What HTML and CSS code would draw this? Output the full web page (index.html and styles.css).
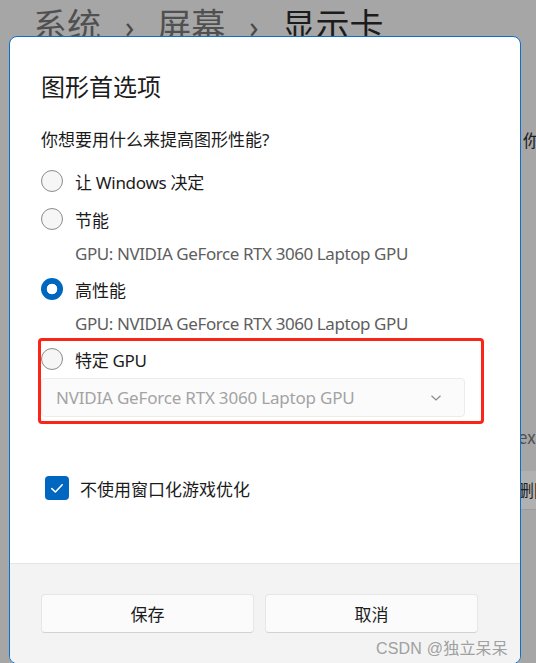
FILE: index.html
```html
<!DOCTYPE html>
<html lang="zh-CN">
<head>
<meta charset="utf-8">
<title>图形首选项</title>
<link rel="stylesheet" href="styles.css">
</head>
<body>
<div class="page">
  <div class="crumbs">
    <span class="crumb">系统</span><span class="sep">›</span><span class="crumb">屏幕</span><span class="sep">›</span><span class="crumb current">显示卡</span>
  </div>
  <div class="bg-list">
    <div class="bg-row first">你</div>
    <div class="bg-row mid">exe</div>
    <div class="bg-row band">删除</div>
  </div>
</div>

<div class="dialog">
  <div class="body">
    <h1 class="title">图形首选项</h1>
    <p class="question">你想要用什么来提高图形性能?</p>
    <div class="options">
      <label class="radio-row"><span class="radio"></span><span class="latin">让 Windows 决定</span></label>
      <label class="radio-row"><span class="radio"></span><span>节能</span></label>
      <div class="sub">GPU: NVIDIA GeForce RTX 3060 Laptop GPU</div>
      <label class="radio-row"><span class="radio checked"></span><span>高性能</span></label>
      <div class="sub">GPU: NVIDIA GeForce RTX 3060 Laptop GPU</div>
      <label class="radio-row"><span class="radio"></span><span class="latin">特定 GPU</span></label>
      <div class="select">
        <span>NVIDIA GeForce RTX 3060 Laptop GPU</span>
        <svg class="chev" width="12" height="8" viewBox="0 0 12 8"><polyline points="1.5,1.8 6,6 10.5,1.8" fill="none" stroke="#8a8a8a" stroke-width="1.2"/></svg>
      </div>
      <div class="highlight"></div>
    </div>
    <label class="check-row">
      <span class="checkbox"><svg width="24" height="24" viewBox="0 0 24 24"><polyline points="6.8,12.6 10.4,16 17.2,8.8" fill="none" stroke="#fff" stroke-width="1.6" stroke-linecap="round" stroke-linejoin="round"/></svg></span>
      <span>不使用窗口化游戏优化</span>
    </label>
  </div>
  <div class="footer">
    <button class="btn">保存</button>
    <button class="btn">取消</button>
  </div>
  <div class="watermark">CSDN @独立呆呆</div>
</div>
</body>
</html>
```
FILE: styles.css
```css
html, body {
  margin: 0;
  padding: 0;
}
body {
  width: 536px;
  height: 663px;
  overflow: hidden;
  background: #a6a6a6;
  font-family: "Noto Sans", "Noto Sans CJK SC", sans-serif;
  position: relative;
}
.page {
  height: 663px;
}
.crumbs {
  display: flex;
  align-items: baseline;
  padding-left: 33px;
  height: 56px;
  font-family: "Noto Sans CJK SC", sans-serif;
  font-size: 34px;
  line-height: 56px;
  color: #505050;
  margin-top: -4px;
  white-space: nowrap;
}
.sep {
  font-family: "Noto Sans", sans-serif;
  font-size: 30px;
  margin: 0 23px 0 24px;
  color: #4a4a4a;
}
.current {
  color: #1c1c1c;
}
.bg-list {
  margin-left: 500px;
  padding-top: 76px;
  font-family: "Noto Sans CJK SC", sans-serif;
  font-size: 17px;
  color: #202020;
  white-space: nowrap;
}
.bg-row {
  padding-left: 23px;
  height: 24px;
  line-height: 24px;
}
.bg-row.mid {
  margin-top: 273px;
  color: #505050;
  padding-left: 18px;
}
.bg-row.band {
  margin-top: 22px;
  height: 38px;
  line-height: 38px;
  background: #b1b1b1;
  border-bottom: 1px solid #9c9c9c;
  padding-left: 17px;
  color: #1f1f1f;
}

.dialog {
  position: absolute;
  left: 9px;
  top: 36px;
  width: 510px;
  height: 626px;
  border: 1px solid #0a6fcf;
  border-radius: 8px;
  background: #ffffff;
  overflow: hidden;
  display: flex;
  flex-direction: column;
  color: #1b1b1b;
}
.body {
  flex: 1;
  padding: 33px 0 0 31px;
  position: relative;
}
.title {
  margin: 0;
  font-family: "Noto Sans CJK SC", sans-serif;
  font-weight: 400;
  font-size: 24px;
  line-height: 32px;
  height: 32px;
}
.question {
  margin: 26px 0 0;
  font-size: 17px;
  line-height: 24px;
  height: 24px;
}
.options {
  margin-top: 10px;
  display: flex;
  flex-direction: column;
  position: relative;
}
.radio-row {
  display: flex;
  align-items: center;
  height: 38px;
  font-size: 17px;
  gap: 12px;
}
.latin {
  letter-spacing: -0.3px;
}
.radio {
  width: 20px;
  height: 20px;
  border-radius: 50%;
  border: 1px solid #8b8b8b;
  background: #f6f6f6;
  flex: none;
}
.radio.checked {
  width: 22px;
  height: 22px;
  border: none;
  background: radial-gradient(circle, #ffffff 0 5px, #0067c0 5.6px);
}
.sub {
  height: 32px;
  line-height: 32px;
  padding-left: 34px;
  font-size: 17px;
  letter-spacing: -0.42px;
  color: #5e5e5e;
}
.select {
  border: 1px solid #ececec;
  border-radius: 4px;
  background: #fbfbfb;
  display: flex;
  align-items: center;
  justify-content: space-between;
  padding: 0 22px 0 14px;
  box-sizing: border-box;
  width: 424px;
  height: 39px;
  font-size: 17px;
  letter-spacing: -0.2px;
  color: #a3a3a3;
}
.chev {
  display: block;
}
.highlight {
  position: absolute;
  left: -3px;
  top: 176px;
  width: 440px;
  height: 80px;
  border: 3px solid #fb2418;
  border-radius: 4px;
  pointer-events: none;
}
.check-row {
  display: flex;
  align-items: center;
  gap: 11px;
  margin-top: 55px;
  margin-left: 4px;
  height: 32px;
  font-size: 17px;
}
.checkbox {
  width: 24px;
  height: 24px;
  border-radius: 4px;
  background: #0067c0;
  flex: none;
}
.checkbox svg {
  display: block;
}
.footer {
  height: 100px;
  background: #f3f3f3;
  border-top: 1px solid #e5e5e5;
  display: grid;
  grid-template-columns: 213px 213px;
  column-gap: 11px;
  align-content: start;
  padding: 30px 0 0 31px;
  box-sizing: border-box;
}
.btn {
  height: 39px;
  border: 1px solid #e6e6e6;
  border-bottom-color: #d2d2d2;
  border-radius: 4px;
  background: #fbfbfb;
  font-family: "Noto Sans CJK SC", sans-serif;
  font-size: 17px;
  color: #1b1b1b;
  padding: 0;
}
.watermark {
  position: absolute;
  right: 12px;
  bottom: 4px;
  font-family: "Liberation Sans", "Noto Sans CJK SC", sans-serif;
  font-size: 16px;
  color: #a0a0a0;
  letter-spacing: 0.2px;
}
```
